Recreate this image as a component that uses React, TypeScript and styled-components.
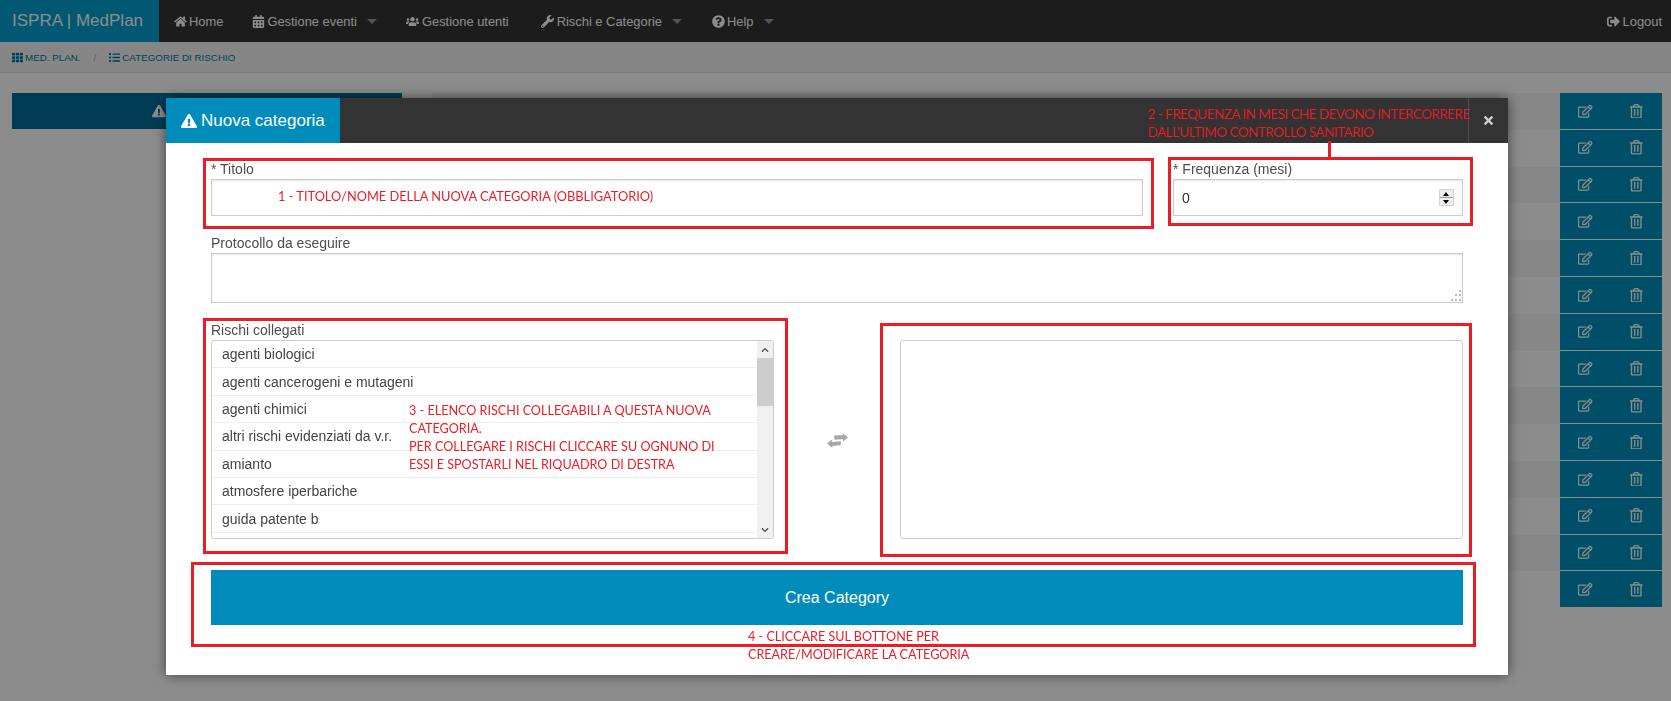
import React, { FC } from "react";
import styled, { createGlobalStyle } from "styled-components";
import {
  FaCalendarAlt,
  FaChevronDown,
  FaChevronUp,
  FaExclamationTriangle,
  FaHome,
  FaList,
  FaQuestionCircle,
  FaRegEdit,
  FaRegTrashAlt,
  FaSignOutAlt,
  FaTh,
  FaTimes,
  FaUsers,
  FaWrench,
} from "react-icons/fa";

const GlobalStyle = createGlobalStyle`
  html, body {
    margin: 0;
    padding: 0;
    height: 100%;
    overflow: hidden;
    background: #fff;
    font-family: "Liberation Sans", Arial, sans-serif;
  }
  * { box-sizing: border-box; }
`;

const NAV_ITEMS = [
  { label: "Home", icon: <FaHome />, caret: false, pad: 14 },
  { label: "Gestione eventi", icon: <FaCalendarAlt />, caret: true, pad: 15 },
  { label: "Gestione utenti", icon: <FaUsers />, caret: false, pad: 18 },
  { label: "Rischi e Categorie", icon: <FaWrench />, caret: true, pad: 15 },
  { label: "Help", icon: <FaQuestionCircle />, caret: true, pad: 15 },
];

const RISKS = [
  "agenti biologici",
  "agenti cancerogeni e mutageni",
  "agenti chimici",
  "altri rischi evidenziati da v.r.",
  "amianto",
  "atmosfere iperbariche",
  "guida patente b",
];

const ROW_COUNT = 14;

const App: FC = () => {
  return (
    <Page>
      <GlobalStyle />
      <TopBar>
        <Brand>ISPRA | MedPlan</Brand>
        {NAV_ITEMS.map((item) => (
          <NavLink key={item.label} $pad={item.pad}>
            <NavIcon>{item.icon}</NavIcon>
            {item.label}
            {item.caret && <Caret />}
          </NavLink>
        ))}
        <LogoutLink $pad={9}>
          <NavIcon>
            <FaSignOutAlt />
          </NavIcon>
          Logout
        </LogoutLink>
      </TopBar>

      <Breadcrumb>
        <Crumb>
          <FaTh />
          MED. PLAN.
        </Crumb>
        <CrumbSlash>/</CrumbSlash>
        <Crumb>
          <FaList />
          CATEGORIE DI RISCHIO
        </Crumb>
      </Breadcrumb>

      <Content>
        <PanelTitle>
          <FaExclamationTriangle />
        </PanelTitle>
        <Table>
          {Array.from({ length: ROW_COUNT }).map((_, i) => (
            <Row key={i} $striped={i % 2 === 0}>
              <RowFill />
              <Actions>
                <FaRegEdit />
                <FaRegTrashAlt />
              </Actions>
            </Row>
          ))}
        </Table>
      </Content>

      <Overlay>
        <Modal>
          <ModalHeader>
            <ModalTab>
              <FaExclamationTriangle />
              Nuova categoria
            </ModalTab>
            <CloseButton>
              <FaTimes />
            </CloseButton>
          </ModalHeader>

          <ModalBody>
            <TopFields>
              <Field>
                <Label>* Titolo</Label>
                <TextInput type="text" />
              </Field>
              <Field>
                <Label>* Frequenza (mesi)</Label>
                <NumberWrap>
                  <TextInput type="text" defaultValue="0" />
                  <Spinner>
                    <SpinUp />
                    <SpinDown />
                  </Spinner>
                </NumberWrap>
              </Field>
            </TopFields>

            <Field>
              <Label>Protocollo da eseguire</Label>
              <AreaWrap>
                <TextArea />
                <Grip viewBox="0 0 12 12">
                  <rect x="9" y="0" width="2" height="2" />
                  <rect x="5" y="4" width="2" height="2" />
                  <rect x="9" y="4" width="2" height="2" />
                  <rect x="1" y="9" width="2" height="2" />
                  <rect x="5" y="9" width="2" height="2" />
                  <rect x="9" y="9" width="2" height="2" />
                </Grip>
              </AreaWrap>
            </Field>

            <Pickers>
              <Field>
                <Label>Rischi collegati</Label>
                <RiskList>
                  <RiskItems>
                    {RISKS.map((risk) => (
                      <RiskItem key={risk}>{risk}</RiskItem>
                    ))}
                  </RiskItems>
                  <ScrollTrack>
                    <ScrollArrow>
                      <FaChevronUp />
                    </ScrollArrow>
                    <ScrollThumb />
                    <ScrollArrowEnd>
                      <FaChevronDown />
                    </ScrollArrowEnd>
                  </ScrollTrack>
                </RiskList>
              </Field>
              <SwapCell>
                <SwapIcon viewBox="0 0 21 15">
                  <path d="M7 2.6 L16 1.9 L15.6 0 L21 4.4 L16.2 8.6 L16 6.2 L7.4 6.8 Z" />
                  <path d="M14 8.2 L5 8.9 L5.2 6.4 L0 10.6 L5.4 15 L5.2 12.9 L13.8 12.3 Z" />
                </SwapIcon>
              </SwapCell>
              <SelectedList />
            </Pickers>

            <CreateButton>Crea Category</CreateButton>
          </ModalBody>

          <TitleFrame />
          <FrequencyFrame />
          <FrequencyTick />
          <RisksFrame />
          <SelectedFrame />
          <ButtonFrame />

          <TitleNote>1 - TITOLO/NOME DELLA NUOVA CATEGORIA (OBBLIGATORIO)</TitleNote>
          <FrequencyNote>
            2 - FREQUENZA IN MESI CHE DEVONO INTERCORRERE
            <br />
            DALL'ULTIMO CONTROLLO SANITARIO
          </FrequencyNote>
          <RisksNote>
            3 - ELENCO RISCHI COLLEGABILI A QUESTA NUOVA
            <br />
            CATEGORIA.
            <br />
            PER COLLEGARE I RISCHI CLICCARE SU OGNUNO DI
            <br />
            ESSI E SPOSTARLI NEL RIQUADRO DI DESTRA
          </RisksNote>
          <ButtonNote>
            4 - CLICCARE SUL BOTTONE PER
            <br />
            CREARE/MODIFICARE LA CATEGORIA
          </ButtonNote>
        </Modal>
      </Overlay>
    </Page>
  );
};

const Page = styled.div`
  position: relative;
  height: 100vh;
  overflow: hidden;
  background: #fff;
`;

const TopBar = styled.nav`
  display: flex;
  align-items: center;
  height: 42px;
  background: #333;
  color: #fff;
  font-size: 12.9px;
`;

const Brand = styled.div`
  display: flex;
  align-items: center;
  width: 159px;
  height: 100%;
  padding-left: 12px;
  background: #00a0d2;
  font-size: 17px;
`;

const NavLink = styled.a<{ $pad: number }>`
  display: flex;
  align-items: center;
  padding: 0 ${(p) => p.$pad}px 0 14px;
  white-space: nowrap;
`;

const LogoutLink = styled(NavLink)`
  margin-left: auto;
  padding-left: 0;
`;

const NavIcon = styled.span`
  display: inline-flex;
  justify-content: center;
  width: 14px;
  margin-right: 2px;
  font-size: 13px;
`;

const Caret = styled.span`
  width: 0;
  height: 0;
  margin-left: 10px;
  border-style: solid;
  border-width: 5px 5px 0;
  border-color: rgba(255, 255, 255, 0.5) transparent transparent;
`;

const Breadcrumb = styled.div`
  display: flex;
  align-items: center;
  height: 31px;
  padding-left: 12px;
  background: #f5f5f5;
  border-bottom: 1px solid #ddd;
  font-size: 9.8px;
  color: #0079a6;
`;

const Crumb = styled.span`
  display: flex;
  align-items: center;
  gap: 2px;
  svg {
    width: 11px;
    height: 11px;
  }
`;

const CrumbSlash = styled.span`
  margin: 0 13px 0 13px;
  color: #aaa;
`;

const Content = styled.div`
  display: flex;
  align-items: flex-start;
  gap: 30px;
  padding: 20px 9px 0 12px;
`;

const PanelTitle = styled.div`
  display: flex;
  align-items: center;
  flex: 0 0 390px;
  height: 36px;
  padding-left: 140px;
  background: #006f9a;
  color: #fff;
  font-size: 14px;
`;

const Table = styled.div`
  flex: 1;
`;

const Row = styled.div<{ $striped: boolean }>`
  display: flex;
  height: 36.8px;
  background: ${(p) => (p.$striped ? "#f6f6f6" : "#fff")};
`;

const RowFill = styled.div`
  flex: 1;
`;

const Actions = styled.div`
  display: grid;
  grid-template-columns: 1fr 1fr;
  justify-items: center;
  align-items: center;
  width: 102px;
  background: #0090bd;
  color: #fff;
  border-bottom: 1px solid #fff;
  font-size: 14.5px;
`;

const Overlay = styled.div`
  position: fixed;
  inset: 0;
  background: rgba(0, 0, 0, 0.45);
`;

const Modal = styled.div`
  position: relative;
  width: 1342px;
  margin: 98px 0 0 166px;
  background: #fff;
  box-shadow: 0 0 12px rgba(0, 0, 0, 0.55);
`;

const ModalHeader = styled.header`
  display: flex;
  justify-content: space-between;
  height: 45px;
  background: #333;
`;

const ModalTab = styled.div`
  display: flex;
  align-items: center;
  gap: 4px;
  width: 174px;
  padding-left: 15px;
  background: #008cba;
  color: #fff;
  font-size: 17px;
  svg {
    font-size: 16px;
  }
`;

const CloseButton = styled.div`
  display: flex;
  align-items: center;
  justify-content: center;
  width: 40px;
  border-left: 1px solid #4f4f4f;
  color: #ccc;
  font-size: 13px;
`;

const ModalBody = styled.div`
  display: flex;
  flex-direction: column;
  gap: 18px;
  padding: 17px 45px 50px;
`;

const TopFields = styled.div`
  display: grid;
  grid-template-columns: 932px 290px;
  gap: 30px;
`;

const Field = styled.div`
  display: flex;
  flex-direction: column;
`;

const Label = styled.label`
  height: 19px;
  font-size: 14px;
  line-height: 19px;
  color: #4d4d4d;
`;

const TextInput = styled.input`
  width: 100%;
  height: 37px;
  padding: 0 8px;
  border: 1px solid #ccc;
  outline: none;
  box-shadow: inset 0 1px 2px rgba(0, 0, 0, 0.1);
  font: 14px "Liberation Sans", Arial, sans-serif;
  color: #333;
`;

const NumberWrap = styled.div`
  position: relative;
`;

const Spinner = styled.div`
  position: absolute;
  top: 10px;
  right: 9px;
  display: flex;
  flex-direction: column;
  width: 15px;
  height: 17px;
  gap: 1px;
  background: #999;
  border: 1px solid #d4d4d4;
`;

const SpinUp = styled.span`
  flex: 1;
  position: relative;
  background: #eee;
  &::after {
    content: "";
    position: absolute;
    left: 3px;
    top: 2px;
    border-style: solid;
    border-width: 0 3px 4px;
    border-color: transparent transparent #000;
  }
`;

const SpinDown = styled.span`
  flex: 1;
  position: relative;
  background: #eee;
  &::after {
    content: "";
    position: absolute;
    left: 3px;
    top: 2px;
    border-style: solid;
    border-width: 4px 3px 0;
    border-color: #000 transparent transparent;
  }
`;

const AreaWrap = styled.div`
  position: relative;
  display: flex;
`;

const TextArea = styled.textarea`
  width: 100%;
  height: 50px;
  border: 1px solid #ccc;
  outline: none;
  resize: none;
  box-shadow: inset 0 1px 2px rgba(0, 0, 0, 0.1);
`;

const Grip = styled.svg`
  position: absolute;
  right: 1px;
  bottom: 1px;
  width: 12px;
  height: 12px;
  fill: #bbb;
`;

const Pickers = styled.div`
  display: grid;
  grid-template-columns: 563px 126px 563px;
  align-items: end;
`;

const RiskList = styled.div`
  display: flex;
  height: 199px;
  overflow: hidden;
  border: 1px solid #ccc;
  border-radius: 3px;
`;

const RiskItems = styled.ul`
  flex: 1;
  margin: 0;
  padding: 0;
  list-style: none;
  overflow: hidden;
`;

const RiskItem = styled.li`
  display: flex;
  align-items: center;
  height: 27.4px;
  padding-left: 10px;
  border-bottom: 1px solid #eee;
  font-size: 14px;
  color: #444;
`;

const ScrollTrack = styled.div`
  display: flex;
  flex-direction: column;
  flex: 0 0 16px;
  background: #f0f0f0;
`;

const ScrollArrow = styled.div`
  display: flex;
  align-items: center;
  justify-content: center;
  height: 17px;
  color: #505050;
  font-size: 8px;
`;

const ScrollArrowEnd = styled(ScrollArrow)`
  margin-top: auto;
`;

const ScrollThumb = styled.div`
  height: 48px;
  background: #cdcdcd;
`;

const SwapCell = styled.div`
  display: flex;
  align-items: center;
  justify-content: center;
  height: 199px;
`;

const SwapIcon = styled.svg`
  width: 21px;
  height: 15px;
  margin-top: 2px;
  fill: #a8a8a8;
`;

const SelectedList = styled.div`
  height: 199px;
  border: 1px solid #ccc;
  border-radius: 3px;
`;

const CreateButton = styled.button`
  height: 55px;
  margin-top: 13px;
  border: none;
  background: #008cba;
  color: #fff;
  font: 16px "Liberation Sans", Arial, sans-serif;
`;

// annotazioni rosse sopra il modale
const Frame = styled.div`
  position: absolute;
  border: 3px solid #ed1c24;
  pointer-events: none;
`;

const TitleFrame = styled(Frame)`
  left: 37px;
  top: 60px;
  width: 951px;
  height: 71px;
`;

const FrequencyFrame = styled(Frame)`
  left: 1002px;
  top: 59px;
  width: 305px;
  height: 69px;
`;

const FrequencyTick = styled.div`
  position: absolute;
  left: 1162px;
  top: 43px;
  width: 3px;
  height: 18px;
  background: #ed1c24;
`;

const RisksFrame = styled(Frame)`
  left: 37px;
  top: 220px;
  width: 585px;
  height: 236px;
`;

const SelectedFrame = styled(Frame)`
  left: 714px;
  top: 225px;
  width: 592px;
  height: 234px;
`;

const ButtonFrame = styled(Frame)`
  left: 25px;
  top: 464px;
  width: 1285px;
  height: 85px;
`;

const Note = styled.div`
  position: absolute;
  font-family: Lato, "Open Sans", sans-serif;
  line-height: 18px;
  color: #ed1c24;
  white-space: nowrap;
`;

const TitleNote = styled(Note)`
  left: 112px;
  top: 89px;
  font-size: 12.8px;
`;

const FrequencyNote = styled(Note)`
  left: 982px;
  top: 7px;
  font-size: 13.5px;
  letter-spacing: -0.55px;
`;

const RisksNote = styled(Note)`
  left: 243px;
  top: 304px;
  font-size: 12.6px;
`;

const ButtonNote = styled(Note)`
  left: 582px;
  top: 530px;
  font-size: 12.6px;
`;

export default App;
